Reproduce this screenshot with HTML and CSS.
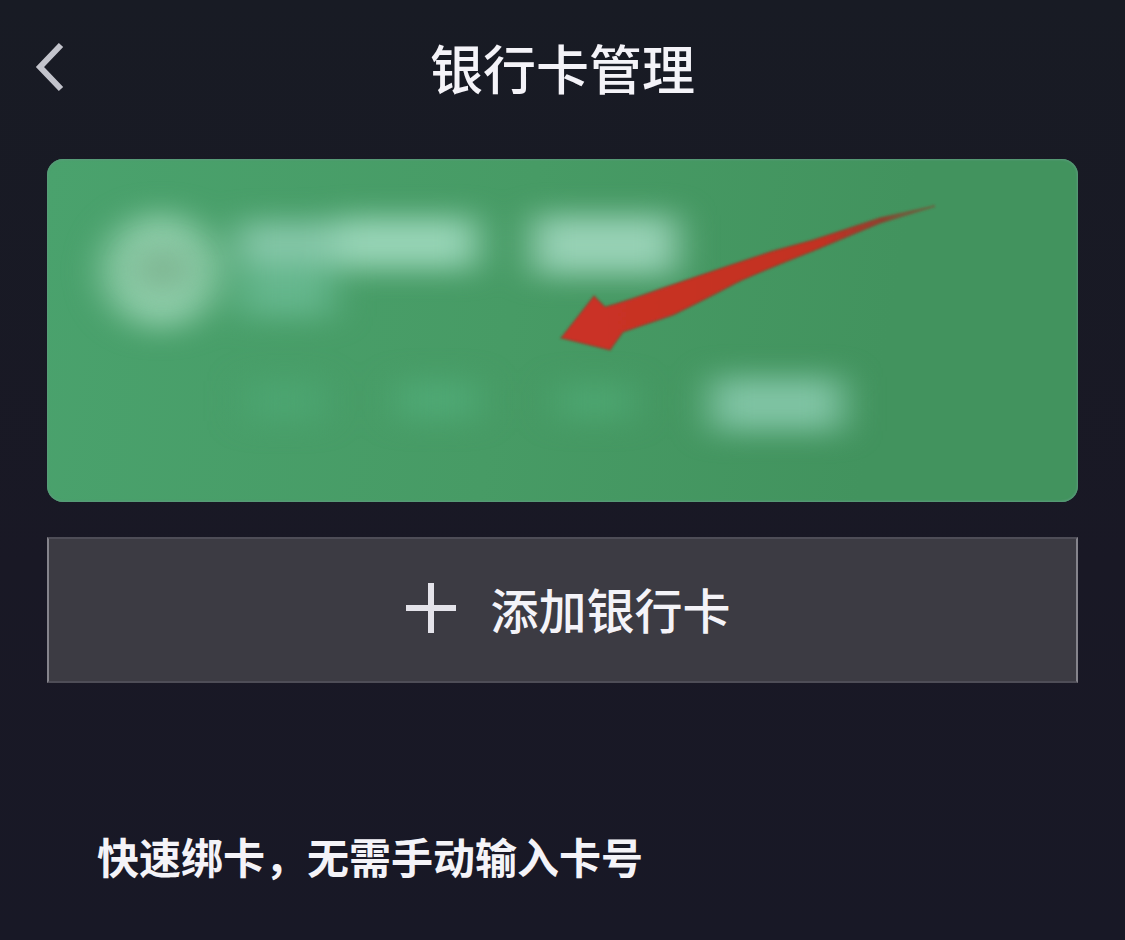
FILE: index.html
```html
<!DOCTYPE html>
<html lang="zh-CN">
  <head>
    <meta charset="utf-8">
    <meta name="viewport" content="width=device-width, initial-scale=1">
    <title>银行卡管理</title>
    <link rel="stylesheet" href="styles.css">
  </head>
  <body>
    <header class="top-bar">
      <button class="back" type="button" aria-label="返回">
        <svg width="32" height="52" viewBox="0 0 32 52" aria-hidden="true">
          <path d="M29 4 L8 26 L29 48" fill="none" stroke="#c3c4cc" stroke-width="6"/>
        </svg>
      </button>
      <h1>银行卡管理</h1>
    </header>

    <main>
      <section class="bank-card" aria-label="银行卡">
        <svg class="card-art" viewBox="0 0 1031 343" aria-hidden="true">
          <defs>
            <filter id="soft" filterUnits="userSpaceOnUse" x="0" y="0" width="1031" height="343" color-interpolation-filters="sRGB">
              <feGaussianBlur stdDeviation="18 14"/>
            </filter>
            <filter id="edge">
              <feGaussianBlur stdDeviation="1"/>
            </filter>
            <linearGradient id="tail" gradientUnits="userSpaceOnUse" x1="514" y1="0" x2="890" y2="0">
              <stop offset="0" stop-color="#cb3025"/>
              <stop offset="0.7" stop-color="#c23024"/>
              <stop offset="0.86" stop-color="#8e4230"/>
              <stop offset="1" stop-color="#4d8450" stop-opacity="0.4"/>
            </linearGradient>
          </defs>

          <!-- hidden bank logo, name and number -->
          <g filter="url(#soft)">
            <circle cx="114" cy="112" r="58" fill="#8ccba7"/>
            <rect x="190" y="62" width="110" height="46" fill="#84c6a7"/>
            <rect x="290" y="58" width="140" height="52" fill="#97d4b6"/>
            <rect x="486" y="56" width="144" height="60" fill="#97d1b5"/>
            <rect x="192" y="106" width="94" height="52" fill="#64b68c"/>
            <rect x="200" y="222" width="75" height="40" fill="#4ca571"/>
            <rect x="350" y="222" width="80" height="38" fill="#4fa975"/>
            <rect x="510" y="225" width="75" height="35" fill="#4da671"/>
            <rect x="664" y="218" width="132" height="54" fill="#80c4a4"/>
          </g>
          <ellipse cx="116" cy="110" rx="26" ry="20" fill="#75a784" opacity="0.65" filter="url(#soft)"/>

          <path filter="url(#edge)" fill="url(#tail)" stroke="#80482f" stroke-opacity="0.55" stroke-width="2" d="M514 179 L547 137 L558 148 Q580 142 613 130 Q680 107 726 92 L766 81 L833 59 L888 47 L833 64 L766 92 Q725 108 693 122 Q655 142 626 156 L576 173 L563 191 Z"/>
        </svg>
      </section>

      <button class="add-card" type="button">
        <svg width="50" height="50" viewBox="0 0 50 50" aria-hidden="true">
          <path d="M25 0 V50 M0 25 H50" fill="none" stroke="#e4e3ea" stroke-width="6"/>
        </svg>
        <span>添加银行卡</span>
      </button>

      <p class="tip">快速绑卡，无需手动输入卡号</p>
    </main>
  </body>
</html>
```

FILE: styles.css
```css
* {
  box-sizing: border-box;
}

body {
  margin: 0;
  min-height: 100vh;
  background: linear-gradient(#181b24, #191825 60%, #181826);
  color: #f4f3f8;
  font-family: "Noto Sans CJK SC", sans-serif;
}

.top-bar {
  display: grid;
  grid-template-columns: 1fr auto 1fr;
  align-items: center;
  padding: 23px 32px 48px;
}

h1 {
  margin: 0;
  font-size: 53px;
  font-weight: 500;
  line-height: 88px;
}

button {
  border: none;
  color: inherit;
  font-family: inherit;
  cursor: pointer;
}

.back {
  justify-self: start;
  padding: 0;
  background: none;
}

.back svg {
  display: block;
}

main {
  padding: 0 47px;
}

.bank-card {
  overflow: hidden;
  border-radius: 16px;
  background: linear-gradient(100deg, #4aa26d, #479b65 45%, #42935e 80%);
  box-shadow: inset 0 0 2px 1px #5b9a7c;
}

.card-art {
  display: block;
  width: 100%;
}

.add-card {
  display: flex;
  align-items: center;
  justify-content: center;
  gap: 34px;
  width: 100%;
  margin-top: 35px;
  padding: 32px 0 36px 12px;
  border: 2px solid #4e4d57;
  border-right-color: #85848c;
  border-left-color: #85848c;
  background: #3c3b43;
  font-size: 48px;
  font-weight: 500;
  line-height: 74px;
}

.tip {
  margin: 0;
  padding: 141px 50px 48px;
  font-size: 42px;
  font-weight: 700;
  line-height: 64px;
}
```
